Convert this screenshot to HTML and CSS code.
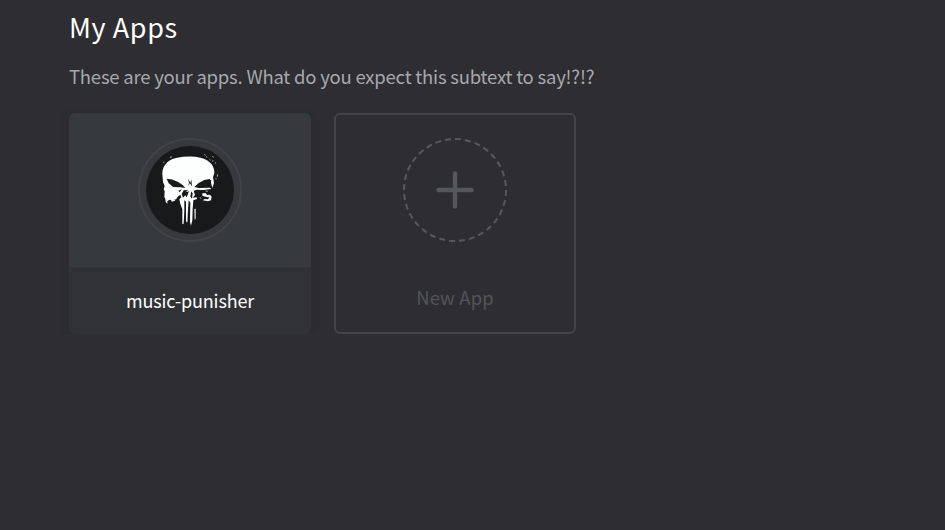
FILE: index.html
```html
<!DOCTYPE html>
<html lang="en">
<head>
<meta charset="utf-8">
<title>My Apps</title>
<link rel="stylesheet" href="styles.css">
</head>
<body>
<main class="page">
  <h1 class="title">My Apps</h1>
  <p class="subtitle">These are your apps. What do you expect this subtext to say!?!?</p>
  <div class="apps">
    <article class="card">
      <div class="card-top">
        <div class="avatar">
          <svg viewBox="48 48 264 264" width="88" height="88" aria-hidden="true">
            <circle cx="180" cy="180" r="132" fill="#18191a"/>
            <path fill="#fdfefe" d="M98 143Q94 118 105 105Q116 89 138 84Q180 76 211 83Q234 88 245 103Q254 118 253 129L249 142L252 159L247 174L243 158L239 147L223 150L206 159L193 171L207 174L240 173L244 177L219 180L201 179L191 182L195 195L188 203L200 202L201 207L190 211L188 236L187 271L183 287L180 276L181 218L176 211L174 239L172 278L168 274L168 215L163 211L163 242L161 281L157 283L157 238L151 222L148 208L154 202L151 194L143 200L139 207L128 211L118 209L112 214L112 221L107 216L106 206L103 202L104 184L101 178L104 168L99 156Z"/>
            <path fill="#18191a" d="M110 146Q126 146 143 155Q157 162 166 174L151 172L130 171L116 160ZM244 150Q220 150 199 169L213 171L235 169L242 163ZM174 145L177 158L175 168L180 159L186 170L184 148L181 159ZM161 181L174 180L167 187L177 184L170 202L166 196L159 203L155 192ZM184 184L188 190L186 206L181 199ZM145 182L155 178L149 187Z"/>
            <path fill="#f5f6f6" d="M217 190L227 189L231 195L240 194L245 200L243 211L234 214L218 211L224 207L234 208L238 202L229 201L217 197ZM193 237L197 236L197 267L194 269ZM123 211L136 208L135 212L125 215Z"/>
            <path stroke="#c8cccb" stroke-width="2.5" stroke-linecap="round" fill="none" d="M224 74l2 1M230 80v1M248 80l2 1M239 88l2 2M248 93h1M234 95l3 2M256 99h1M263 134l-1 5M258 146v1M121 82l4-1M101 96v1M228 183l4 1M210 203l3 2"/>
          </svg>
        </div>
      </div>
      <div class="card-name">music-punisher</div>
    </article>
    <article class="card card-new">
      <svg class="add" viewBox="0 0 104 104" width="104" height="104" aria-hidden="true">
        <circle class="add-ring" cx="52" cy="52" r="51" pathLength="320" transform="rotate(-90 52 52)"/>
        <path class="add-plus" d="M52 35.5V68.5M35.5 52H68.5"/>
      </svg>
      <div class="new-name">New App</div>
    </article>
  </div>
</main>
</body>
</html>
```
FILE: styles.css
```css
* { box-sizing: border-box; }
body {
  margin: 0;
  background: #2e2d32;
  font-family: "Noto Sans CJK SC", "Noto Sans", sans-serif;
}
.page { padding: 7px 69px 0; }
.title {
  margin: 0;
  height: 40px;
  color: #fff;
  font-size: 27px;
  font-weight: 400;
  line-height: 40px;
  letter-spacing: .6px;
}
.subtitle {
  margin: 14px 0 0;
  height: 30px;
  color: #a6a8ae;
  font-size: 18.5px;
  line-height: 30px;
  letter-spacing: -.22px;
  white-space: nowrap;
}
.apps { display: flex; gap: 23px; margin-top: 22px; }
.card {
  width: 242px;
  height: 221px;
  border-radius: 6px;
  background: #313236;
  box-shadow: 0 2px 8px rgba(32, 34, 37, .2);
  overflow: hidden;
}
.card-top {
  display: flex;
  justify-content: center;
  height: 154px;
  padding-top: 25px;
  background: #36393e;
}
.avatar {
  width: 104px;
  height: 104px;
  padding: 6px;
  border: 2px solid #414347;
  border-radius: 50%;
}
.avatar svg { display: block; }
.card-name {
  color: #fff;
  font-size: 18px;
  line-height: 67px;
  letter-spacing: -.15px;
  text-align: center;
}
.card-new {
  display: flex;
  flex-direction: column;
  align-items: center;
  padding-top: 23px;
  border: 2px solid #434448;
  background: none;
  box-shadow: none;
}
.add-ring {
  fill: none;
  stroke: #55595e;
  stroke-width: 2;
  stroke-dasharray: 6 4;
}
.add-plus {
  fill: none;
  stroke: #54575c;
  stroke-width: 4.5;
  stroke-linecap: round;
}
.new-name {
  margin-top: 40px;
  color: #53545a;
  font-size: 18.5px;
  line-height: 30px;
  letter-spacing: .1px;
}
```
